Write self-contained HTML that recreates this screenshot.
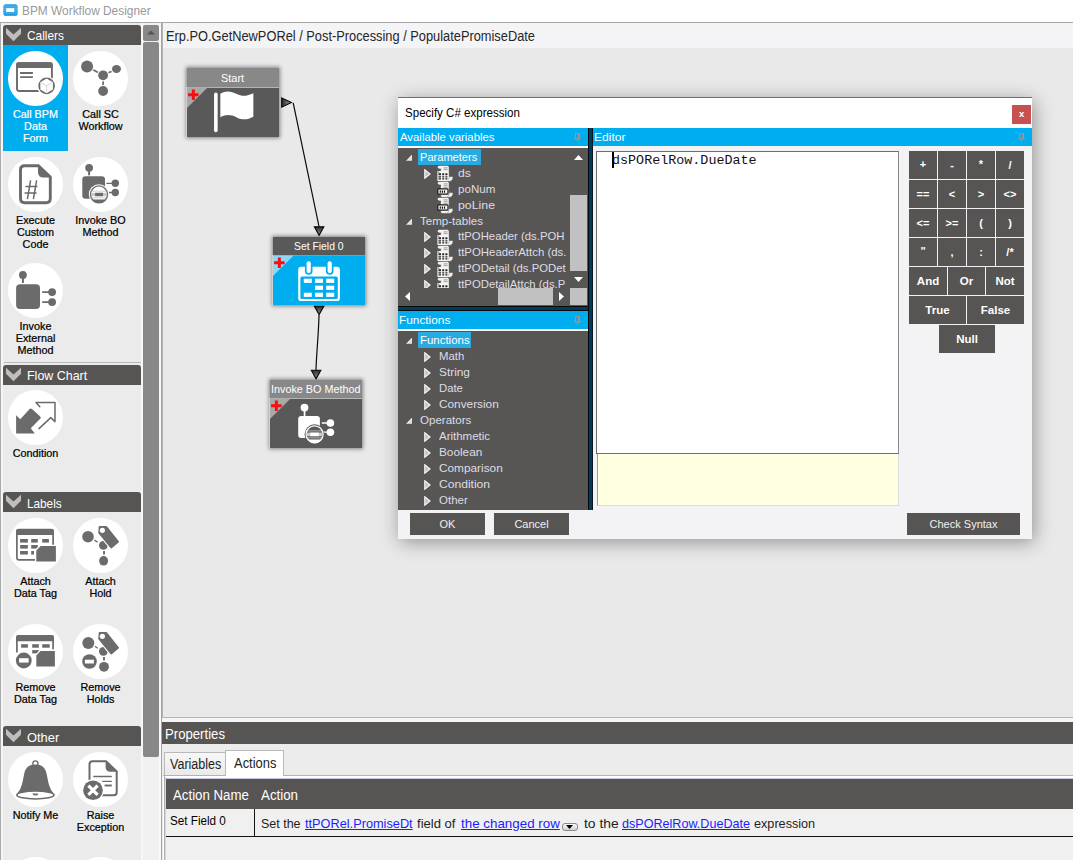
<!DOCTYPE html>
<html><head><meta charset="utf-8"><title>BPM Workflow Designer</title>
<style>
html,body{margin:0;padding:0;}
body{width:1073px;height:860px;overflow:hidden;position:relative;background:#e9e9e9;font-family:"Liberation Sans",sans-serif;}
div,span.t,svg{position:absolute;}
span.t{white-space:pre;}
span.k{-webkit-text-stroke:0.22px;}
a{color:#1c1cff;text-decoration:underline;}
</style></head>
<body>
<div style="left:0px;top:0px;width:1073px;height:22px;background:#ffffff;"></div>
<div style="left:0px;top:22px;width:1073px;height:1px;background:#a8a8a8;"></div>
<svg style="left:2.8px;top:3.9px" width="15" height="12" viewBox="0 0 15 12"><defs><linearGradient id="ti" x1="0" y1="0" x2="0" y2="1"><stop offset="0" stop-color="#1293dc"/><stop offset="0.18" stop-color="#3fb9f2"/><stop offset="0.5" stop-color="#45bdf4"/><stop offset="0.85" stop-color="#2aa6ea"/><stop offset="1" stop-color="#0a7cc6"/></linearGradient></defs><rect x="0.3" y="0.2" width="14.4" height="11.6" rx="2.6" fill="url(#ti)"/><path d="M0.3 3.2 H14.7 M0.3 5.6 H14.7 M0.3 7.6 H14.7" stroke="#6f8796" stroke-width="0.8" opacity="0.85"/><rect x="3.2" y="4.2" width="8" height="3.8" fill="#fff"/></svg>
<span class="t" style="top:5px;font-size:12px;line-height:12px;color:#999999;left:22px;transform-origin:0 0;transform:scaleX(0.9906);">BPM Workflow Designer</span>
<div style="left:0px;top:23px;width:161px;height:837px;background:#ebebeb;"></div>
<div style="left:0px;top:23px;width:3px;height:837px;background:#f5f5f5;"></div>
<div style="left:0px;top:23px;width:1px;height:837px;background:#a9a9a9;"></div>
<div style="left:141px;top:23px;width:20px;height:837px;background:#f0f0f0;"></div>
<div style="left:141px;top:23px;width:2px;height:837px;background:#f7f7f7;"></div>
<div style="left:159px;top:23px;width:2px;height:837px;background:#f9f9f9;"></div>
<div style="left:161px;top:23px;width:1px;height:837px;background:#a4a4a6;"></div>
<div style="left:162px;top:23px;width:1px;height:695px;background:#b2b2b6;"></div>
<div style="left:143px;top:25px;width:16px;height:16px;background:#888888;border-radius:2px;"></div>
<svg style="left:147px;top:30px" width="8" height="5" viewBox="0 0 8 5"><path d="M0 4.5 L4 0.5 L8 4.5 Z" fill="#555"/></svg>
<div style="left:143px;top:42px;width:16px;height:715px;background:#888888;border-radius:2px;"></div>
<div style="left:3px;top:25px;width:138px;height:20px;background:#575553;border-radius:3px 3px 0 0;"></div>
<svg style="left:5px;top:27px" width="17" height="15" viewBox="5 0 17 15"><path d="M6 0.8 L13.5 7.4 L21 0.8 V6.8 L13.5 14.3 L6 6.8 Z" fill="#bfbebd"/></svg>
<span class="t" style="top:30px;font-size:12.8px;line-height:12.8px;color:#ffffff;left:27px;transform-origin:0 0;transform:scaleX(0.9286);">Callers</span>
<div style="left:4px;top:362px;width:137px;height:1px;background:#b9b9b9;"></div>
<div style="left:3px;top:365px;width:138px;height:20px;background:#575553;border-radius:3px 3px 0 0;"></div>
<svg style="left:5px;top:367px" width="17" height="15" viewBox="5 0 17 15"><path d="M6 0.8 L13.5 7.4 L21 0.8 V6.8 L13.5 14.3 L6 6.8 Z" fill="#bfbebd"/></svg>
<span class="t" style="top:370px;font-size:12.8px;line-height:12.8px;color:#ffffff;left:27px;transform-origin:0 0;transform:scaleX(0.9735);">Flow Chart</span>
<div style="left:3px;top:492px;width:138px;height:20px;background:#575553;border-radius:3px 3px 0 0;"></div>
<svg style="left:5px;top:494px" width="17" height="15" viewBox="5 0 17 15"><path d="M6 0.8 L13.5 7.4 L21 0.8 V6.8 L13.5 14.3 L6 6.8 Z" fill="#bfbebd"/></svg>
<span class="t" style="top:498px;font-size:12.8px;line-height:12.8px;color:#ffffff;left:27px;transform-origin:0 0;transform:scaleX(0.9189);">Labels</span>
<div style="left:3px;top:726px;width:138px;height:20px;background:#575553;border-radius:3px 3px 0 0;"></div>
<svg style="left:5px;top:728px" width="17" height="15" viewBox="5 0 17 15"><path d="M6 0.8 L13.5 7.4 L21 0.8 V6.8 L13.5 14.3 L6 6.8 Z" fill="#bfbebd"/></svg>
<span class="t" style="top:732px;font-size:12.8px;line-height:12.8px;color:#ffffff;left:27px;transform-origin:0 0;transform:scaleX(1.0078);">Other</span>
<div style="left:3px;top:45px;width:65px;height:106px;background:#00adef;"></div>
<div style="left:8.100000000000001px;top:51.10000000000001px;width:54.8px;height:54.6px;border-radius:50%;background:#ffffff;"></div>
<svg style="left:8.0px;top:50.900000000000006px" width="55" height="55" viewBox="0 0 55 55"><rect x="9" y="12.1" width="34.9" height="27.9" rx="2.2" fill="#fff" stroke="#6b6b6b" stroke-width="1.9"/><path d="M8.1 17 V13.4 Q8.1 11.2 10.3 11.2 H42.6 Q44.8 11.2 44.8 13.4 V17 Z" fill="#6b6b6b"/><path d="M12.1 22 H24.9 M12.1 26.1 H24.9" stroke="#6b6b6b" stroke-width="1.8"/><circle cx="38.6" cy="34.9" r="9.6" fill="#fff"/><circle cx="38.6" cy="34.9" r="8.3" fill="#6b6b6b"/><polygon points="38.6,27.6 44.9,31.2 44.9,38.5 38.6,42.2 32.3,38.6 32.3,31.2" fill="#fff"/><path d="M32.6 31.6 L38.6 34.7 L44.6 31.6 M38.6 34.7 V41" stroke="#cfcfcf" stroke-width="0.9" fill="none"/></svg>
<span class="t k" style="top:109px;font-size:10.8px;line-height:10.8px;color:#ffffff;left:35.5px;transform:translateX(-50%);">Call BPM</span>
<span class="t k" style="top:121px;font-size:10.8px;line-height:10.8px;color:#ffffff;left:35.5px;transform:translateX(-50%);">Data</span>
<span class="t k" style="top:133px;font-size:10.8px;line-height:10.8px;color:#ffffff;left:35.5px;transform:translateX(-50%);">Form</span>
<div style="left:73.1px;top:51.10000000000001px;width:54.8px;height:54.6px;border-radius:50%;background:#ffffff;"></div>
<svg style="left:73.0px;top:50.900000000000006px" width="55" height="55" viewBox="0 0 55 55"><path d="M14.1 15.6 L30.1 24.3 L43.5 18 M30.1 24.3 V40" stroke="#6b6b6b" stroke-width="1.7" fill="none"/><circle cx="14.1" cy="15.6" r="7.2" fill="#fff"/><circle cx="30.1" cy="24.3" r="6.1" fill="#fff"/><circle cx="43.5" cy="18" r="5.6" fill="#fff"/><circle cx="30.1" cy="40" r="6.1" fill="#fff"/><circle cx="14.1" cy="15.6" r="6" fill="#6b6b6b"/><circle cx="30.1" cy="24.3" r="4.9" fill="#6b6b6b"/><ellipse cx="43.5" cy="18" rx="4.5" ry="4" fill="#6b6b6b"/><circle cx="30.1" cy="40" r="4.9" fill="#6b6b6b"/></svg>
<span class="t k" style="top:109px;font-size:10.8px;line-height:10.8px;color:#000000;left:100.5px;transform:translateX(-50%);">Call SC</span>
<span class="t k" style="top:121px;font-size:10.8px;line-height:10.8px;color:#000000;left:100.5px;transform:translateX(-50%);">Workflow</span>
<div style="left:8.100000000000001px;top:157.1px;width:54.8px;height:54.6px;border-radius:50%;background:#ffffff;"></div>
<svg style="left:8.0px;top:156.9px" width="55" height="55" viewBox="0 0 55 55"><path d="M16.6 8.7 H30.5 L42.3 20 V41.6 Q42.3 45.7 38.2 45.7 H16.6 Q12.5 45.7 12.5 41.6 V12.8 Q12.5 8.7 16.6 8.7 Z" fill="#fff" stroke="#6b6b6b" stroke-width="2.9" stroke-linejoin="round"/><path d="M30 7.6 L43.6 20.6 H35.5 Q30 20.6 30 15 Z" fill="#6b6b6b"/><path d="M22.6 23.4 L19.4 42.2 M28.6 23.4 L25.4 42.2 M17.4 29.6 H29.4 M16.6 36 H28.6" stroke="#6b6b6b" stroke-width="1.5" fill="none"/></svg>
<span class="t k" style="top:215px;font-size:10.8px;line-height:10.8px;color:#000000;left:35.5px;transform:translateX(-50%);">Execute</span>
<span class="t k" style="top:227px;font-size:10.8px;line-height:10.8px;color:#000000;left:35.5px;transform:translateX(-50%);">Custom</span>
<span class="t k" style="top:239px;font-size:10.8px;line-height:10.8px;color:#000000;left:35.5px;transform:translateX(-50%);">Code</span>
<div style="left:73.1px;top:157.1px;width:54.8px;height:54.6px;border-radius:50%;background:#ffffff;"></div>
<svg style="left:73.0px;top:156.9px" width="55" height="55" viewBox="0 0 55 55"><circle cx="16.1" cy="10.8" r="3.9" fill="#6b6b6b"/><rect x="15.1" y="13" width="2" height="5.3" fill="#6b6b6b"/><rect x="9.3" y="19.2" width="22.7" height="22.6" rx="3.2" fill="#6b6b6b"/><path d="M33.4 26.3 H40 M33.4 35.5 H40" stroke="#6b6b6b" stroke-width="1.3"/><circle cx="42.3" cy="26.3" r="3.7" fill="#6b6b6b"/><circle cx="42.3" cy="35.5" r="3.7" fill="#6b6b6b"/><circle cx="26" cy="37.4" r="10.2" fill="#fff"/><circle cx="26" cy="37.4" r="8.5" fill="#fff" stroke="#6b6b6b" stroke-width="1.4"/><path d="M19.2 42.6 A8.6 8.6 0 0 0 32.8 42.6 Z" fill="#6b6b6b"/><rect x="18" y="35.8" width="16" height="3.4" fill="#c8c8c8"/><rect x="22.1" y="35.8" width="7.9" height="3.4" fill="#6b6b6b"/><path d="M18.4 34.2 H33.6 M18.4 40.8 H33.6" stroke="#bdbdbd" stroke-width="0.7"/></svg>
<span class="t k" style="top:215px;font-size:10.8px;line-height:10.8px;color:#000000;left:100.5px;transform:translateX(-50%);">Invoke BO</span>
<span class="t k" style="top:227px;font-size:10.8px;line-height:10.8px;color:#000000;left:100.5px;transform:translateX(-50%);">Method</span>
<div style="left:8.100000000000001px;top:263.09999999999997px;width:54.8px;height:54.6px;border-radius:50%;background:#ffffff;"></div>
<svg style="left:8.0px;top:262.9px" width="55" height="55" viewBox="0 0 55 55"><circle cx="14.9" cy="12" r="3.9" fill="#6b6b6b"/><rect x="13.9" y="14" width="2" height="6" fill="#6b6b6b"/><rect x="8.1" y="21.2" width="23.9" height="24.8" rx="4" fill="#6b6b6b"/><path d="M34.2 29.1 H42 M34.2 39.1 H42" stroke="#6b6b6b" stroke-width="1.6"/><circle cx="44.1" cy="29.1" r="3.9" fill="#6b6b6b"/><circle cx="44.1" cy="39.1" r="3.9" fill="#6b6b6b"/></svg>
<span class="t k" style="top:321px;font-size:10.8px;line-height:10.8px;color:#000000;left:35.5px;transform:translateX(-50%);">Invoke</span>
<span class="t k" style="top:333px;font-size:10.8px;line-height:10.8px;color:#000000;left:35.5px;transform:translateX(-50%);">External</span>
<span class="t k" style="top:345px;font-size:10.8px;line-height:10.8px;color:#000000;left:35.5px;transform:translateX(-50%);">Method</span>
<div style="left:8.100000000000001px;top:390.4px;width:54.8px;height:54.6px;border-radius:50%;background:#ffffff;"></div>
<svg style="left:8.0px;top:390.2px" width="55" height="55" viewBox="0 0 55 55"><path d="M8.1 25.2 L12.3 29.2 L21.6 19 Q22.8 17.8 24 19 L32.2 26.4 Q33.4 27.6 32.2 28.8 L22.8 38.2 L26.8 43.6 H8.1 Z" fill="#6b6b6b"/><path d="M31 38.6 L42.8 27.6 L47 31.6 V12.6 H28 L31.8 16.8" fill="none" stroke="#6b6b6b" stroke-width="1.5" stroke-linecap="round" stroke-linejoin="round"/></svg>
<span class="t k" style="top:448px;font-size:10.8px;line-height:10.8px;color:#000000;left:35.5px;transform:translateX(-50%);">Condition</span>
<div style="left:8.100000000000001px;top:518.4000000000001px;width:54.8px;height:54.6px;border-radius:50%;background:#ffffff;"></div>
<svg style="left:8.0px;top:518.2px" width="55" height="55" viewBox="0 0 55 55"><rect x="8.9" y="11.700000000000001" width="36.2" height="30.200000000000003" rx="2.2" fill="#fff" stroke="#6b6b6b" stroke-width="1.7"/><path d="M8.1 17.1 V13.100000000000001 Q8.1 10.9 10.3 10.9 H43.7 Q45.9 10.9 45.9 13.100000000000001 V17.1 Z" fill="#6b6b6b"/><rect x="12.1" y="21" width="7.8" height="3.6" fill="#6b6b6b"/><rect x="23.2" y="21" width="6.6" height="3.6" fill="#6b6b6b"/><rect x="34.2" y="21" width="6.7" height="3.6" fill="#6b6b6b"/><rect x="12.1" y="27" width="7.8" height="3.6" fill="#6b6b6b"/><rect x="23.2" y="27" width="6.6" height="3.6" fill="#6b6b6b"/><rect x="12.1" y="33" width="7.8" height="3.5" fill="#6b6b6b"/><rect x="23.2" y="33" width="2.8" height="3.5" fill="#6b6b6b"/><path d="M27 44.8 V32 L32 26.8 H49 V44.8 Z" fill="#fff"/><path d="M28.3 43.6 V32.6 L32.6 28 H47.9 V43.6 Z" fill="#6b6b6b"/></svg>
<span class="t k" style="top:576px;font-size:10.8px;line-height:10.8px;color:#000000;left:35.5px;transform:translateX(-50%);">Attach</span>
<span class="t k" style="top:588px;font-size:10.8px;line-height:10.8px;color:#000000;left:35.5px;transform:translateX(-50%);">Data Tag</span>
<div style="left:73.1px;top:518.4000000000001px;width:54.8px;height:54.6px;border-radius:50%;background:#ffffff;"></div>
<svg style="left:73.0px;top:518.2px" width="55" height="55" viewBox="0 0 55 55"><path d="M21.4 22.1 L24.6 24.1" stroke="#6b6b6b" stroke-width="1.3"/><path d="M31 33 V36.6" stroke="#6b6b6b" stroke-width="1.9"/><circle cx="15" cy="18.7" r="5.8" fill="#6b6b6b"/><circle cx="30.4" cy="27.3" r="4.4" fill="#6b6b6b"/><path d="M26.6 7.9 H32.9 Q33.6 7.9 34.1 8.5 L45.8 23.2 Q46.3 23.9 45.6 24.5 L38.8 30.2 Q38.1 30.8 37.5 30.1 L25.6 15.6 Q25.2 15.1 25.3 14.5 L25.7 8.7 Q25.8 7.9 26.6 7.9 Z" fill="#fff" stroke="#fff" stroke-width="2.2" stroke-linejoin="round"/><path d="M26.6 7.9 H32.9 Q33.6 7.9 34.1 8.5 L45.8 23.2 Q46.3 23.9 45.6 24.5 L38.8 30.2 Q38.1 30.8 37.5 30.1 L25.6 15.6 Q25.2 15.1 25.3 14.5 L25.7 8.7 Q25.8 7.9 26.6 7.9 Z" fill="#6b6b6b"/><circle cx="29.4" cy="12.3" r="2.6" fill="#fff"/><ellipse cx="30.6" cy="42.8" rx="4.5" ry="4.8" fill="#6b6b6b"/></svg>
<span class="t k" style="top:576px;font-size:10.8px;line-height:10.8px;color:#000000;left:100.5px;transform:translateX(-50%);">Attach</span>
<span class="t k" style="top:588px;font-size:10.8px;line-height:10.8px;color:#000000;left:100.5px;transform:translateX(-50%);">Hold</span>
<div style="left:8.100000000000001px;top:624.3000000000001px;width:54.8px;height:54.6px;border-radius:50%;background:#ffffff;"></div>
<svg style="left:8.0px;top:624.1px" width="55" height="55" viewBox="0 0 55 55"><rect x="8.9" y="11.8" width="36.2" height="29.4" rx="2.2" fill="#fff" stroke="#6b6b6b" stroke-width="1.7"/><path d="M8.1 17.2 V13.2 Q8.1 11 10.3 11 H43.7 Q45.9 11 45.9 13.2 V17.2 Z" fill="#6b6b6b"/><rect x="6" y="28.5" width="42" height="16" fill="#fff"/><rect x="44" y="25.5" width="4" height="4" fill="#fff"/><rect x="13.1" y="20.2" width="6.8" height="3.5" fill="#6b6b6b"/><rect x="24.2" y="20.2" width="6.6" height="3.5" fill="#6b6b6b"/><rect x="34.2" y="20.2" width="7.5" height="3.5" fill="#6b6b6b"/><rect x="24.2" y="26.1" width="6.6" height="3.3" fill="#6b6b6b"/><path d="M27 44 V31 L32 25.8 H48 V44 Z" fill="#fff"/><path d="M28.3 42.6 V31.4 L32.5 27 H46.9 V42.6 Z" fill="#6b6b6b"/><circle cx="15.8" cy="36.5" r="9" fill="#fff"/><circle cx="15.8" cy="36.5" r="7.9" fill="#6b6b6b"/><rect x="11.1" y="34.2" width="9.5" height="4.4" fill="#fff"/></svg>
<span class="t k" style="top:682px;font-size:10.8px;line-height:10.8px;color:#000000;left:35.5px;transform:translateX(-50%);">Remove</span>
<span class="t k" style="top:694px;font-size:10.8px;line-height:10.8px;color:#000000;left:35.5px;transform:translateX(-50%);">Data Tag</span>
<div style="left:73.1px;top:624.3000000000001px;width:54.8px;height:54.6px;border-radius:50%;background:#ffffff;"></div>
<svg style="left:73.0px;top:624.1px" width="55" height="55" viewBox="0 0 55 55"><path d="M21.8 22.3 L24.8 24.2" stroke="#6b6b6b" stroke-width="1.3"/><path d="M31 33 V36.6" stroke="#6b6b6b" stroke-width="1.9"/><circle cx="15.3" cy="19" r="6" fill="#6b6b6b"/><circle cx="30.4" cy="27.3" r="4.4" fill="#6b6b6b"/><path d="M26.6 7.9 H32.9 Q33.6 7.9 34.1 8.5 L45.8 23.2 Q46.3 23.9 45.6 24.5 L38.8 30.2 Q38.1 30.8 37.5 30.1 L25.6 15.6 Q25.2 15.1 25.3 14.5 L25.7 8.7 Q25.8 7.9 26.6 7.9 Z" fill="#fff" stroke="#fff" stroke-width="2.2" stroke-linejoin="round"/><path d="M26.6 7.9 H32.9 Q33.6 7.9 34.1 8.5 L45.8 23.2 Q46.3 23.9 45.6 24.5 L38.8 30.2 Q38.1 30.8 37.5 30.1 L25.6 15.6 Q25.2 15.1 25.3 14.5 L25.7 8.7 Q25.8 7.9 26.6 7.9 Z" fill="#6b6b6b"/><circle cx="29.4" cy="12.3" r="2.6" fill="#fff"/><circle cx="31" cy="42.8" r="4.9" fill="#6b6b6b"/><circle cx="16.5" cy="37.5" r="8.4" fill="#fff"/><circle cx="16.5" cy="37.5" r="7.3" fill="#6b6b6b"/><rect x="11.9" y="35.7" width="9" height="3.8" fill="#fff"/></svg>
<span class="t k" style="top:682px;font-size:10.8px;line-height:10.8px;color:#000000;left:100.5px;transform:translateX(-50%);">Remove</span>
<span class="t k" style="top:694px;font-size:10.8px;line-height:10.8px;color:#000000;left:100.5px;transform:translateX(-50%);">Holds</span>
<div style="left:8.100000000000001px;top:752.0px;width:54.8px;height:54.6px;border-radius:50%;background:#ffffff;"></div>
<svg style="left:8.0px;top:753.0px" width="55" height="55" viewBox="0 0 55 55"><circle cx="27.4" cy="10.4" r="2.6" fill="#fff" stroke="#6b6b6b" stroke-width="1.3"/><path d="M27.4 11.6 C21 11.6 17.6 15 16.4 20 C15 26 14.6 31 12.2 36 C10.8 39 8.6 40.4 8.2 42.2 L46.6 42.2 C46.2 40.4 44 39 42.6 36 C40.2 31 39.8 26 38.4 20 C37.2 15 33.8 11.6 27.4 11.6 Z" fill="#6b6b6b"/><ellipse cx="27.4" cy="42" rx="18.6" ry="3.9" fill="#fff" stroke="#6b6b6b" stroke-width="1.5"/><path d="M24.2 40.4 H30.6 Q29.6 42.6 27.4 42.6 Q25.2 42.6 24.2 40.4 Z" fill="#6b6b6b"/></svg>
<span class="t k" style="top:810px;font-size:10.8px;line-height:10.8px;color:#000000;left:35.5px;transform:translateX(-50%);">Notify Me</span>
<div style="left:73.1px;top:752.0px;width:54.8px;height:54.6px;border-radius:50%;background:#ffffff;"></div>
<svg style="left:73.0px;top:753.0px" width="55" height="55" viewBox="0 0 55 55"><path d="M19.5 8.2 H33 L43.7 18.4 V39.2 Q43.7 42.2 40.7 42.2 H19.5 Q16.5 42.2 16.5 39.2 V11.2 Q16.5 8.2 19.5 8.2 Z" fill="#fff" stroke="#6b6b6b" stroke-width="2" stroke-linejoin="round"/><path d="M32.6 7.4 L44.6 18.8 H37.4 Q32.6 18.8 32.6 14 Z" fill="#6b6b6b"/><path d="M20.3 23.5 H38.8 M29.2 28.3 H38.8" stroke="#6b6b6b" stroke-width="1.3"/><path d="M31.6 32.5 H38.8" stroke="#6b6b6b" stroke-width="1.9"/><circle cx="20" cy="37.3" r="11" fill="#fff"/><circle cx="20" cy="37.3" r="9.8" fill="#6b6b6b"/><path d="M15.4 32.7 L24.6 41.9 M24.6 32.7 L15.4 41.9" stroke="#fff" stroke-width="3.2"/></svg>
<span class="t k" style="top:810px;font-size:10.8px;line-height:10.8px;color:#000000;left:100.5px;transform:translateX(-50%);">Raise</span>
<span class="t k" style="top:822px;font-size:10.8px;line-height:10.8px;color:#000000;left:100.5px;transform:translateX(-50%);">Exception</span>
<div style="left:8.100000000000001px;top:857.2px;width:54.8px;height:54.6px;border-radius:50%;background:#ffffff;"></div>
<div style="left:73.1px;top:857.2px;width:54.8px;height:54.6px;border-radius:50%;background:#ffffff;"></div>
<div style="left:163px;top:23px;width:910px;height:25px;background:#f4f4f6;"></div>
<span class="t" style="top:29px;font-size:14px;line-height:14px;color:#262626;left:166px;transform-origin:0 0;transform:scaleX(0.9154);">Erp.PO.GetNewPORel / Post-Processing / PopulatePromiseDate</span>
<div style="left:163px;top:48px;width:910px;height:669px;background:#e9e9e9;"></div>
<div style="left:163px;top:717px;width:910px;height:1px;background:#b5b5b5;"></div>
<div style="left:162px;top:718px;width:911px;height:4px;background:#f5f5f5;"></div>
<svg style="left:163px;top:48px" width="400" height="420" viewBox="163 48 400 420">
<defs><linearGradient id="agv" x1="0" y1="0" x2="0" y2="1"><stop offset="0" stop-color="#2a2a2a"/><stop offset="1" stop-color="#9a9a9a"/></linearGradient>
<linearGradient id="agh" x1="0" y1="0" x2="1" y2="0"><stop offset="0" stop-color="#2a2a2a"/><stop offset="1" stop-color="#a0a0a0"/></linearGradient></defs>
<path d="M293.2 102.9 L319 226.5" stroke="#0a0a0a" stroke-width="1.2" fill="none"/>
<path d="M319 315 C318.6 335 316.5 352 316 370" stroke="#0a0a0a" stroke-width="1.2" fill="none"/>
<path d="M281.7 98 L291.4 102.6 L281.7 107.2 Z" fill="url(#agh)" stroke="#0a0a0a" stroke-width="1.15"/>
<path d="M314.4 226.8 L323.8 226.8 L319.1 235.4 Z" fill="url(#agv)" stroke="#0a0a0a" stroke-width="1.15"/>
<path d="M314.4 306.2 L323.8 306.2 L319.1 314.6 Z" fill="url(#agv)" stroke="#0a0a0a" stroke-width="1.15"/>
<path d="M311.4 370.2 L320.8 370.2 L316.1 378.8 Z" fill="url(#agv)" stroke="#0a0a0a" stroke-width="1.15"/>
</svg>
<div style="left:187px;top:68px;width:92px;height:69px;background:#595959;box-shadow:0 0 4px 1px rgba(0,0,0,0.45);"></div>
<div style="left:187px;top:68px;width:92px;height:19px;background:#888888;"></div>
<div style="left:187px;top:87px;width:92px;height:1px;background:rgba(255,255,255,0.55);"></div>
<div style="left:186px;top:87px;width:1px;height:50px;background:rgba(255,255,255,0.45);"></div>
<svg style="left:187px;top:87px" width="92" height="50" viewBox="0 0 92 50"><path d="M0 0.5 L20.6 0.5 L0 21.1 Z" fill="#a9a9a9"/><path d="M1.1 7.75 H11.6 M6.35 2.5 V13" stroke="#fb0d0d" stroke-width="3"/><g transform="translate(0.75 0)"><rect x="26.3" y="5.6" width="3.6" height="39.6" rx="1.8" fill="#fff"/><path d="M32.6 6.8 C38 3.6 43 4 49 7 C55 10 60 8.8 65.6 6.2 L65.6 29.8 C60 32.8 55 33.4 49 30.4 C43 27.4 38 27.2 32.6 30.2 Z" fill="#fff"/></g></svg>
<span class="t" style="top:73px;font-size:11.5px;line-height:11.5px;color:#ffffff;left:221px;transform-origin:0 0;transform:scaleX(0.9525);">Start</span>
<div style="left:273px;top:237px;width:92px;height:68px;background:#00adef;box-shadow:0 0 4px 1px rgba(0,0,0,0.45);"></div>
<div style="left:273px;top:237px;width:92px;height:18px;background:#595959;"></div>
<div style="left:273px;top:255px;width:92px;height:1px;background:rgba(255,255,255,0.16);"></div>
<div style="left:272px;top:255px;width:1px;height:50px;background:rgba(255,255,255,0.45);"></div>
<svg style="left:273px;top:255px" width="92" height="50" viewBox="0 0 92 50"><path d="M0 0.5 L20.6 0.5 L0 21.1 Z" fill="#8fd6f6"/><path d="M1.1 7.75 H11.6 M6.35 2.5 V13" stroke="#fb0d0d" stroke-width="3"/><rect x="25.2" y="11.8" width="41.7" height="34.3" rx="3.2" fill="#fff"/><rect x="27.4" y="21.6" width="37.4" height="22.4" rx="1.6" fill="#00adef"/><rect x="30.8" y="23.7" width="8" height="4.2" fill="#fff"/><rect x="42" y="23.7" width="8" height="4.2" fill="#fff"/><rect x="53.2" y="23.7" width="8" height="4.2" fill="#fff"/><rect x="42" y="30.7" width="8" height="4.2" fill="#fff"/><rect x="53.2" y="30.7" width="8" height="4.2" fill="#fff"/><rect x="30.8" y="37.7" width="8" height="4.2" fill="#fff"/><rect x="42" y="37.7" width="8" height="4.2" fill="#fff"/><rect x="53.2" y="37.7" width="8" height="4.2" fill="#fff"/><rect x="31.9" y="4.6" width="7.6" height="15.2" rx="3.8" fill="#00adef"/><rect x="52.9" y="4.6" width="7.6" height="15.2" rx="3.8" fill="#00adef"/><rect x="33.6" y="6.2" width="4.2" height="12" rx="2.1" fill="#fff"/><rect x="54.6" y="6.2" width="4.2" height="12" rx="2.1" fill="#fff"/></svg>
<span class="t" style="top:241px;font-size:11.5px;line-height:11.5px;color:#ffffff;left:294px;transform-origin:0 0;transform:scaleX(0.9019);">Set Field 0</span>
<div style="left:270px;top:380px;width:92px;height:68px;background:#595959;box-shadow:0 0 4px 1px rgba(0,0,0,0.45);"></div>
<div style="left:270px;top:380px;width:92px;height:18px;background:#888888;"></div>
<div style="left:270px;top:398px;width:92px;height:1px;background:rgba(255,255,255,0.55);"></div>
<div style="left:269px;top:398px;width:1px;height:50px;background:rgba(255,255,255,0.45);"></div>
<svg style="left:270px;top:398px" width="92" height="50" viewBox="0 0 92 50"><path d="M0 0.5 L20.6 0.5 L0 21.1 Z" fill="#a9a9a9"/><path d="M1.1 7.75 H11.6 M6.35 2.5 V13" stroke="#fb0d0d" stroke-width="3"/><circle cx="34.5" cy="9.6" r="3.9" fill="#fff"/><rect x="33.7" y="12" width="1.7" height="6.5" fill="#fff"/><rect x="28.2" y="18" width="21.7" height="22" rx="3" fill="#fff"/><path d="M51.8 25 H58 M51.8 34.2 H58" stroke="#fff" stroke-width="1.3"/><circle cx="60.4" cy="25" r="3.8" fill="#fff"/><circle cx="60.4" cy="34.2" r="3.8" fill="#fff"/><circle cx="44.6" cy="36.3" r="10" fill="#595959"/><circle cx="44.6" cy="36.3" r="8.5" fill="#595959" stroke="#fff" stroke-width="1.3"/><path d="M37.6 41.6 A8.5 8.5 0 0 0 51.6 41.6 Z" fill="#fff"/><rect x="36.4" y="34.6" width="16.6" height="3.6" fill="#c9c9c9"/><rect x="40.4" y="34.6" width="8.4" height="3.6" fill="#fff"/><path d="M37 32.9 H52.2 M37 39.9 H52.2" stroke="#d8d8d8" stroke-width="0.7"/></svg>
<span class="t" style="top:384px;font-size:11.5px;line-height:11.5px;color:#ffffff;left:271px;transform-origin:0 0;transform:scaleX(0.9388);">Invoke BO Method</span>
<div style="left:162px;top:722px;width:911px;height:22px;background:#575553;"></div>
<span class="t" style="top:727px;font-size:14px;line-height:14px;color:#ffffff;left:165px;transform-origin:0 0;transform:scaleX(0.9397);">Properties</span>
<div style="left:162px;top:744px;width:911px;height:116px;background:#ececec;"></div>
<div style="left:164px;top:752px;width:61.5px;height:23.5px;background:linear-gradient(#f7f7f7,#e9e9e9);border:1px solid #b9b9b9;border-bottom:none;box-sizing:border-box;"></div>
<span class="t" style="top:757px;font-size:14px;line-height:14px;color:#1e1e1e;left:170px;transform-origin:0 0;transform:scaleX(0.8949);">Variables</span>
<div style="left:163px;top:775px;width:910px;height:1px;background:#b3b3b3;"></div>
<div style="left:163px;top:776px;width:910px;height:84px;background:#ffffff;"></div>
<div style="left:164px;top:775px;width:1px;height:85px;background:#b0b0b0;"></div>
<div style="left:225px;top:750px;width:59px;height:26px;background:#ffffff;border:1px solid #b9b9b9;border-bottom:none;box-sizing:border-box;"></div>
<span class="t" style="top:756px;font-size:14px;line-height:14px;color:#1e1e1e;left:234px;transform-origin:0 0;transform:scaleX(0.9246);">Actions</span>
<div style="left:166px;top:779px;width:907px;height:81px;background:#f0f0f0;"></div>
<div style="left:165px;top:777px;width:1px;height:83px;background:#d4d4ee;"></div>
<div style="left:165px;top:778px;width:908px;height:1px;background:#c3c4e2;"></div>
<div style="left:166px;top:779px;width:907px;height:30px;background:#575553;"></div>
<span class="t" style="top:788px;font-size:14px;line-height:14px;color:#ffffff;left:173px;transform-origin:0 0;transform:scaleX(0.9472);">Action Name</span>
<span class="t" style="top:788px;font-size:14px;line-height:14px;color:#ffffff;left:261px;transform-origin:0 0;transform:scaleX(0.9517);">Action</span>
<div style="left:166px;top:809px;width:907px;height:27px;background:#f0f0f0;"></div>
<div style="left:254px;top:809px;width:1px;height:27px;background:#111111;"></div>
<div style="left:166px;top:836px;width:907px;height:1px;background:#111111;"></div>
<span class="t" style="top:815px;font-size:12px;line-height:12px;color:#000000;left:170px;transform-origin:0 0;transform:scaleX(0.9722);">Set Field 0</span>
<span class="t" style="top:817px;font-size:13.5px;line-height:13.5px;color:#1e1e1e;left:261px;transform-origin:0 0;transform:scaleX(0.9236);">Set the</span>
<span class="t" style="top:817px;font-size:13.5px;line-height:13.5px;color:#1c1cff;left:305px;transform-origin:0 0;transform:scaleX(0.9440);text-decoration:underline;">ttPORel.PromiseDt</span>
<span class="t" style="top:817px;font-size:13.5px;line-height:13.5px;color:#1e1e1e;left:417px;transform-origin:0 0;transform:scaleX(0.9672);">field of</span>
<span class="t" style="top:817px;font-size:13.5px;line-height:13.5px;color:#1c1cff;left:461px;transform-origin:0 0;transform:scaleX(0.9900);text-decoration:underline;">the changed row</span>
<div style="left:561.5px;top:822.5px;width:16.5px;height:8.5px;border:1px solid #8a8a8a;border-radius:3px;background:linear-gradient(#fafafa,#d2d2d2);box-sizing:border-box;"></div>
<svg style="left:566px;top:825px" width="7" height="4" viewBox="0 0 7 4"><path d="M0 0 H7 L3.5 4 Z" fill="#000"/></svg>
<span class="t" style="top:817px;font-size:13.5px;line-height:13.5px;color:#1e1e1e;left:584px;transform-origin:0 0;transform:scaleX(1.0259);">to the</span>
<span class="t" style="top:817px;font-size:13.5px;line-height:13.5px;color:#1c1cff;left:622px;transform-origin:0 0;transform:scaleX(0.9324);text-decoration:underline;">dsPORelRow.DueDate</span>
<span class="t" style="top:817px;font-size:13.5px;line-height:13.5px;color:#1e1e1e;left:754px;transform-origin:0 0;transform:scaleX(0.9366);">expression</span>
<div style="left:398px;top:98px;width:634px;height:441px;background:#f3f3f5;box-shadow:2px 3px 18px 0 rgba(0,0,0,0.38);"></div>
<div style="left:398px;top:97px;width:634px;height:1px;background:#6f6f6f;"></div>
<div style="left:398px;top:98px;width:634px;height:30px;background:#ffffff;"></div>
<span class="t" style="top:107px;font-size:12px;line-height:12px;color:#000000;left:405px;transform-origin:0 0;transform:scaleX(0.9624);">Specify C# expression</span>
<div style="left:1012px;top:105px;width:19px;height:19px;background:#c75050;"></div>
<span class="t" style="top:109px;font-size:9.6px;line-height:9.6px;color:#ffffff;font-weight:700;left:1021.6px;transform:translateX(-50%);">x</span>
<div style="left:398px;top:128px;width:190px;height:18px;background:#00adef;"></div>
<span class="t" style="top:132px;font-size:11px;line-height:11px;color:#ffffff;left:400px;transform-origin:0 0;transform:scaleX(1.0322);">Available variables</span>
<svg style="left:574px;top:133px" width="7" height="9" viewBox="0 0 7 9"><path d="M1 0 H6 V5.3 H7 V6.4 H4.1 V9 H3 V6.4 H0 V5.3 H1 Z M2 1 V5.3 H4 V1 Z" fill="#a3928b" fill-rule="evenodd"/></svg>
<div style="left:398px;top:146px;width:190px;height:2px;background:#fcf8f6;"></div>
<div style="left:398px;top:148px;width:190px;height:158px;background:#585654;"></div>
<div style="left:398px;top:306px;width:190px;height:5px;background:#003a5d;"></div>
<div style="left:398px;top:306px;width:190px;height:1px;background:#0a0a0a;"></div>
<div style="left:398px;top:310px;width:190px;height:1px;background:#0a0a0a;"></div>
<div style="left:398px;top:311px;width:190px;height:18px;background:#00adef;"></div>
<span class="t" style="top:315px;font-size:11px;line-height:11px;color:#ffffff;left:399px;transform-origin:0 0;transform:scaleX(1.0762);">Functions</span>
<svg style="left:574px;top:316px" width="7" height="9" viewBox="0 0 7 9"><path d="M1 0 H6 V5.3 H7 V6.4 H4.1 V9 H3 V6.4 H0 V5.3 H1 Z M2 1 V5.3 H4 V1 Z" fill="#a3928b" fill-rule="evenodd"/></svg>
<div style="left:398px;top:329px;width:190px;height:2px;background:#fcf8f6;"></div>
<div style="left:398px;top:331px;width:190px;height:178.5px;background:#585654;"></div>
<div style="left:588px;top:128px;width:5px;height:381.5px;background:#003a5d;"></div>
<div style="left:588px;top:128px;width:1px;height:381.5px;background:#0a0a0a;"></div>
<div style="left:592.4px;top:128px;width:0.6px;height:381.5px;background:#0a1520;"></div>
<div style="left:593px;top:128px;width:439px;height:18px;background:#00adef;"></div>
<span class="t" style="top:132px;font-size:11px;line-height:11px;color:#ffffff;left:594px;transform-origin:0 0;transform:scaleX(1.0929);">Editor</span>
<svg style="left:1018px;top:133px" width="7" height="9" viewBox="0 0 7 9"><path d="M1 0 H6 V5.3 H7 V6.4 H4.1 V9 H3 V6.4 H0 V5.3 H1 Z M2 1 V5.3 H4 V1 Z" fill="#a3928b" fill-rule="evenodd"/></svg>
<div style="left:418px;top:149px;width:63px;height:16px;background:#29abe2;"></div>
<svg style="left:405.6px;top:154.3px" width="6.6" height="6.8" viewBox="0 0 6.6 6.8"><path d="M6.5 0 V6.7 H0 Z" fill="#ececec"/><path d="M5.3 3.2 V5.5 H3 Z" fill="#c9c9c9"/></svg>
<span class="t" style="top:152px;font-size:11px;line-height:11px;color:#ffffff;left:420px;transform-origin:0 0;transform:scaleX(1.0067);">Parameters</span>
<svg style="left:424px;top:168.6px" width="7" height="10" viewBox="0 0 6.6 9.8"><path d="M0.6 0.7 L5.8 4.9 L0.6 9.1 Z" fill="#c2c2c2" stroke="#f6f6f6" stroke-width="1.1"/></svg>
<svg style="left:436.6px;top:165.3px" width="16.5" height="17" viewBox="0 0 16.5 17"><path d="M2.6 0.4 H10.4 Q12.1 0.4 12.1 2.1 V11.6 H16 Q16.2 16.4 12 16.4 H5.2 Q3.6 16.4 3.6 14.8 V3.9 H2.4 Q0.3 3.9 0.3 2.1 Q0.3 0.4 2.6 0.4 Z" fill="#f3f3f3" stroke="#454341" stroke-width="0.5"/><path d="M12.1 11.9 Q12.3 15.2 10 16.2" stroke="#9a9a9a" stroke-width="0.7" fill="none"/><path d="M6.6 2.9 H10.6 M6.6 4.7 H10.6" stroke="#9d9d9d" stroke-width="1"/><rect x="0.4" y="6" width="11" height="10" fill="#f6f6f6"/><rect x="1.2" y="6.7" width="1" height="0.9" fill="#222"/><path d="M1.5 9.3 H4 M5.2 9.3 H7.2 M8.4 9.3 H10.4" stroke="#262422" stroke-width="1.9"/><path d="M1.5 11.9 H4 M5.2 11.9 H7.2 M8.4 11.9 H10.4 M1.5 13.9 H4 M5.2 13.9 H7.2 M8.4 13.9 H10.4" stroke="#262422" stroke-width="1.1"/></svg>
<span class="t" style="top:168px;font-size:11px;line-height:11px;color:#dddde6;left:458px;transform-origin:0 0;transform:scaleX(1.1053);">ds</span>
<svg style="left:436.6px;top:181.3px" width="16.5" height="17" viewBox="0 0 16.5 17"><path d="M2.6 0.4 H10.4 Q12.1 0.4 12.1 2.1 V11.6 H16 Q16.2 16.4 12 16.4 H5.2 Q3.6 16.4 3.6 14.8 V3.9 H2.4 Q0.3 3.9 0.3 2.1 Q0.3 0.4 2.6 0.4 Z" fill="#f3f3f3" stroke="#454341" stroke-width="0.5"/><path d="M12.1 11.9 Q12.3 15.2 10 16.2" stroke="#9a9a9a" stroke-width="0.7" fill="none"/><path d="M6.6 2.9 H10.6 M6.6 4.7 H10.6" stroke="#9d9d9d" stroke-width="1"/><path d="M6.6 6.4 H10.6" stroke="#9d9d9d" stroke-width="1"/><rect x="0.8" y="7.9" width="10.2" height="5.2" rx="0.9" fill="#f4f4f4" stroke="#1c1a18" stroke-width="1.2"/><path d="M3.3 9.4 V11.7 M5.4 9.4 V11.7 M7.5 9.4 V11.7" stroke="#1c1a18" stroke-width="1.2"/></svg>
<span class="t" style="top:184px;font-size:11px;line-height:11px;color:#dddde6;left:458px;transform-origin:0 0;transform:scaleX(1.0530);">poNum</span>
<svg style="left:436.6px;top:197.3px" width="16.5" height="17" viewBox="0 0 16.5 17"><path d="M2.6 0.4 H10.4 Q12.1 0.4 12.1 2.1 V11.6 H16 Q16.2 16.4 12 16.4 H5.2 Q3.6 16.4 3.6 14.8 V3.9 H2.4 Q0.3 3.9 0.3 2.1 Q0.3 0.4 2.6 0.4 Z" fill="#f3f3f3" stroke="#454341" stroke-width="0.5"/><path d="M12.1 11.9 Q12.3 15.2 10 16.2" stroke="#9a9a9a" stroke-width="0.7" fill="none"/><path d="M6.6 2.9 H10.6 M6.6 4.7 H10.6" stroke="#9d9d9d" stroke-width="1"/><path d="M6.6 6.4 H10.6" stroke="#9d9d9d" stroke-width="1"/><rect x="0.8" y="7.9" width="10.2" height="5.2" rx="0.9" fill="#f4f4f4" stroke="#1c1a18" stroke-width="1.2"/><path d="M3.3 9.4 V11.7 M5.4 9.4 V11.7 M7.5 9.4 V11.7" stroke="#1c1a18" stroke-width="1.2"/></svg>
<span class="t" style="top:200px;font-size:11px;line-height:11px;color:#dddde6;left:458px;transform-origin:0 0;transform:scaleX(1.1199);">poLine</span>
<svg style="left:405.6px;top:218.3px" width="6.6" height="6.8" viewBox="0 0 6.6 6.8"><path d="M6.5 0 V6.7 H0 Z" fill="#ececec"/><path d="M5.3 3.2 V5.5 H3 Z" fill="#c9c9c9"/></svg>
<span class="t" style="top:216px;font-size:11px;line-height:11px;color:#dddde6;left:420px;transform-origin:0 0;transform:scaleX(1.0503);">Temp-tables</span>
<svg style="left:424px;top:232.2px" width="7" height="10" viewBox="0 0 6.6 9.8"><path d="M0.6 0.7 L5.8 4.9 L0.6 9.1 Z" fill="#c2c2c2" stroke="#f6f6f6" stroke-width="1.1"/></svg>
<svg style="left:436.6px;top:228.70000000000002px" width="16.5" height="17" viewBox="0 0 16.5 17"><path d="M2.6 0.4 H10.4 Q12.1 0.4 12.1 2.1 V11.6 H16 Q16.2 16.4 12 16.4 H5.2 Q3.6 16.4 3.6 14.8 V3.9 H2.4 Q0.3 3.9 0.3 2.1 Q0.3 0.4 2.6 0.4 Z" fill="#f3f3f3" stroke="#454341" stroke-width="0.5"/><path d="M12.1 11.9 Q12.3 15.2 10 16.2" stroke="#9a9a9a" stroke-width="0.7" fill="none"/><path d="M6.6 2.9 H10.6 M6.6 4.7 H10.6" stroke="#9d9d9d" stroke-width="1"/><rect x="0.4" y="6" width="11" height="10" fill="#f6f6f6"/><rect x="1.2" y="6.7" width="1" height="0.9" fill="#222"/><path d="M1.5 9.3 H4 M5.2 9.3 H7.2 M8.4 9.3 H10.4" stroke="#262422" stroke-width="1.9"/><path d="M1.5 11.9 H4 M5.2 11.9 H7.2 M8.4 11.9 H10.4 M1.5 13.9 H4 M5.2 13.9 H7.2 M8.4 13.9 H10.4" stroke="#262422" stroke-width="1.1"/></svg>
<span class="t" style="top:231px;font-size:11px;line-height:11px;color:#dddde6;left:458px;transform-origin:0 0;transform:scaleX(1.0306);">ttPOHeader (ds.POH</span>
<svg style="left:424px;top:248.2px" width="7" height="10" viewBox="0 0 6.6 9.8"><path d="M0.6 0.7 L5.8 4.9 L0.6 9.1 Z" fill="#c2c2c2" stroke="#f6f6f6" stroke-width="1.1"/></svg>
<svg style="left:436.6px;top:244.70000000000002px" width="16.5" height="17" viewBox="0 0 16.5 17"><path d="M2.6 0.4 H10.4 Q12.1 0.4 12.1 2.1 V11.6 H16 Q16.2 16.4 12 16.4 H5.2 Q3.6 16.4 3.6 14.8 V3.9 H2.4 Q0.3 3.9 0.3 2.1 Q0.3 0.4 2.6 0.4 Z" fill="#f3f3f3" stroke="#454341" stroke-width="0.5"/><path d="M12.1 11.9 Q12.3 15.2 10 16.2" stroke="#9a9a9a" stroke-width="0.7" fill="none"/><path d="M6.6 2.9 H10.6 M6.6 4.7 H10.6" stroke="#9d9d9d" stroke-width="1"/><rect x="0.4" y="6" width="11" height="10" fill="#f6f6f6"/><rect x="1.2" y="6.7" width="1" height="0.9" fill="#222"/><path d="M1.5 9.3 H4 M5.2 9.3 H7.2 M8.4 9.3 H10.4" stroke="#262422" stroke-width="1.9"/><path d="M1.5 11.9 H4 M5.2 11.9 H7.2 M8.4 11.9 H10.4 M1.5 13.9 H4 M5.2 13.9 H7.2 M8.4 13.9 H10.4" stroke="#262422" stroke-width="1.1"/></svg>
<span class="t" style="top:247px;font-size:11px;line-height:11px;color:#dddde6;left:458px;transform-origin:0 0;transform:scaleX(1.0370);">ttPOHeaderAttch (ds.</span>
<svg style="left:424px;top:264.2px" width="7" height="10" viewBox="0 0 6.6 9.8"><path d="M0.6 0.7 L5.8 4.9 L0.6 9.1 Z" fill="#c2c2c2" stroke="#f6f6f6" stroke-width="1.1"/></svg>
<svg style="left:436.6px;top:260.7px" width="16.5" height="17" viewBox="0 0 16.5 17"><path d="M2.6 0.4 H10.4 Q12.1 0.4 12.1 2.1 V11.6 H16 Q16.2 16.4 12 16.4 H5.2 Q3.6 16.4 3.6 14.8 V3.9 H2.4 Q0.3 3.9 0.3 2.1 Q0.3 0.4 2.6 0.4 Z" fill="#f3f3f3" stroke="#454341" stroke-width="0.5"/><path d="M12.1 11.9 Q12.3 15.2 10 16.2" stroke="#9a9a9a" stroke-width="0.7" fill="none"/><path d="M6.6 2.9 H10.6 M6.6 4.7 H10.6" stroke="#9d9d9d" stroke-width="1"/><rect x="0.4" y="6" width="11" height="10" fill="#f6f6f6"/><rect x="1.2" y="6.7" width="1" height="0.9" fill="#222"/><path d="M1.5 9.3 H4 M5.2 9.3 H7.2 M8.4 9.3 H10.4" stroke="#262422" stroke-width="1.9"/><path d="M1.5 11.9 H4 M5.2 11.9 H7.2 M8.4 11.9 H10.4 M1.5 13.9 H4 M5.2 13.9 H7.2 M8.4 13.9 H10.4" stroke="#262422" stroke-width="1.1"/></svg>
<span class="t" style="top:263px;font-size:11px;line-height:11px;color:#dddde6;left:458px;transform-origin:0 0;transform:scaleX(1.0297);">ttPODetail (ds.PODet</span>
<div style="left:398px;top:277px;width:172px;height:11px;overflow:hidden;">
<svg style="left:26px;top:3.2px" width="7" height="10" viewBox="0 0 6.6 9.8"><path d="M0.6 0.7 L5.8 4.9 L0.6 9.1 Z" fill="#c2c2c2" stroke="#f6f6f6" stroke-width="1.1"/></svg>
<svg style="left:38.6px;top:-0.3px" width="16.5" height="17" viewBox="0 0 16.5 17"><path d="M2.6 0.4 H10.4 Q12.1 0.4 12.1 2.1 V11.6 H16 Q16.2 16.4 12 16.4 H5.2 Q3.6 16.4 3.6 14.8 V3.9 H2.4 Q0.3 3.9 0.3 2.1 Q0.3 0.4 2.6 0.4 Z" fill="#f3f3f3" stroke="#454341" stroke-width="0.5"/><path d="M12.1 11.9 Q12.3 15.2 10 16.2" stroke="#9a9a9a" stroke-width="0.7" fill="none"/><path d="M6.6 2.9 H10.6 M6.6 4.7 H10.6" stroke="#9d9d9d" stroke-width="1"/><rect x="0.4" y="6" width="11" height="10" fill="#f6f6f6"/><rect x="1.2" y="6.7" width="1" height="0.9" fill="#222"/><path d="M1.5 9.3 H4 M5.2 9.3 H7.2 M8.4 9.3 H10.4" stroke="#262422" stroke-width="1.9"/><path d="M1.5 11.9 H4 M5.2 11.9 H7.2 M8.4 11.9 H10.4 M1.5 13.9 H4 M5.2 13.9 H7.2 M8.4 13.9 H10.4" stroke="#262422" stroke-width="1.1"/></svg>
<span class="t" style="top:2px;font-size:11px;line-height:11px;color:#dddde6;left:60px;transform-origin:0 0;transform:scaleX(1.0324);">ttPODetailAttch (ds.P</span>
</div>
<div style="left:570px;top:148px;width:18px;height:140px;background:#585654;"></div>
<svg style="left:573.8px;top:155px" width="9" height="5" viewBox="0 0 9 5"><path d="M0 5 L4.5 0 L9 5 Z" fill="#ffffff"/></svg>
<div style="left:570px;top:195px;width:17px;height:76px;background:#c1c1c1;"></div>
<svg style="left:573.8px;top:276.5px" width="9" height="5" viewBox="0 0 9 5"><path d="M0 0 L4.5 5 L9 0 Z" fill="#ffffff"/></svg>
<div style="left:398px;top:288px;width:172px;height:17px;background:#585654;"></div>
<svg style="left:404.5px;top:292px" width="5" height="9" viewBox="0 0 5 9"><path d="M5 0 L0 4.5 L5 9 Z" fill="#ffffff"/></svg>
<div style="left:498px;top:288px;width:55px;height:17px;background:#c1c1c1;"></div>
<svg style="left:559px;top:292px" width="5" height="9" viewBox="0 0 5 9"><path d="M0 0 L5 4.5 L0 9 Z" fill="#ffffff"/></svg>
<div style="left:570px;top:288px;width:17px;height:17px;background:#c1c1c1;"></div>
<div style="left:418px;top:332px;width:53px;height:15.6px;background:#29abe2;"></div>
<svg style="left:405.6px;top:337.2px" width="6.6" height="6.8" viewBox="0 0 6.6 6.8"><path d="M6.5 0 V6.7 H0 Z" fill="#ececec"/><path d="M5.3 3.2 V5.5 H3 Z" fill="#c9c9c9"/></svg>
<span class="t" style="top:335px;font-size:11px;line-height:11px;color:#ffffff;left:420px;transform-origin:0 0;transform:scaleX(1.0401);">Functions</span>
<svg style="left:424px;top:351.5px" width="7" height="10" viewBox="0 0 6.6 9.8"><path d="M0.6 0.7 L5.8 4.9 L0.6 9.1 Z" fill="#c2c2c2" stroke="#f6f6f6" stroke-width="1.1"/></svg>
<span class="t" style="top:351px;font-size:11px;line-height:11px;color:#dddde6;left:439px;transform-origin:0 0;transform:scaleX(1.0303);">Math</span>
<svg style="left:424px;top:367.5px" width="7" height="10" viewBox="0 0 6.6 9.8"><path d="M0.6 0.7 L5.8 4.9 L0.6 9.1 Z" fill="#c2c2c2" stroke="#f6f6f6" stroke-width="1.1"/></svg>
<span class="t" style="top:367px;font-size:11px;line-height:11px;color:#dddde6;left:439px;transform-origin:0 0;transform:scaleX(1.0770);">String</span>
<svg style="left:424px;top:383.5px" width="7" height="10" viewBox="0 0 6.6 9.8"><path d="M0.6 0.7 L5.8 4.9 L0.6 9.1 Z" fill="#c2c2c2" stroke="#f6f6f6" stroke-width="1.1"/></svg>
<span class="t" style="top:383px;font-size:11px;line-height:11px;color:#dddde6;left:439px;transform-origin:0 0;transform:scaleX(1.0257);">Date</span>
<svg style="left:424px;top:399.5px" width="7" height="10" viewBox="0 0 6.6 9.8"><path d="M0.6 0.7 L5.8 4.9 L0.6 9.1 Z" fill="#c2c2c2" stroke="#f6f6f6" stroke-width="1.1"/></svg>
<span class="t" style="top:399px;font-size:11px;line-height:11px;color:#dddde6;left:439px;transform-origin:0 0;transform:scaleX(1.0742);">Conversion</span>
<svg style="left:405.6px;top:417.2px" width="6.6" height="6.8" viewBox="0 0 6.6 6.8"><path d="M6.5 0 V6.7 H0 Z" fill="#ececec"/><path d="M5.3 3.2 V5.5 H3 Z" fill="#c9c9c9"/></svg>
<span class="t" style="top:415px;font-size:11px;line-height:11px;color:#dddde6;left:420px;transform-origin:0 0;transform:scaleX(1.0507);">Operators</span>
<svg style="left:424px;top:431.5px" width="7" height="10" viewBox="0 0 6.6 9.8"><path d="M0.6 0.7 L5.8 4.9 L0.6 9.1 Z" fill="#c2c2c2" stroke="#f6f6f6" stroke-width="1.1"/></svg>
<span class="t" style="top:431px;font-size:11px;line-height:11px;color:#dddde6;left:439px;transform-origin:0 0;transform:scaleX(1.0443);">Arithmetic</span>
<svg style="left:424px;top:447.5px" width="7" height="10" viewBox="0 0 6.6 9.8"><path d="M0.6 0.7 L5.8 4.9 L0.6 9.1 Z" fill="#c2c2c2" stroke="#f6f6f6" stroke-width="1.1"/></svg>
<span class="t" style="top:447px;font-size:11px;line-height:11px;color:#dddde6;left:439px;transform-origin:0 0;transform:scaleX(1.0716);">Boolean</span>
<svg style="left:424px;top:463.5px" width="7" height="10" viewBox="0 0 6.6 9.8"><path d="M0.6 0.7 L5.8 4.9 L0.6 9.1 Z" fill="#c2c2c2" stroke="#f6f6f6" stroke-width="1.1"/></svg>
<span class="t" style="top:463px;font-size:11px;line-height:11px;color:#dddde6;left:439px;transform-origin:0 0;transform:scaleX(1.0749);">Comparison</span>
<svg style="left:424px;top:479.5px" width="7" height="10" viewBox="0 0 6.6 9.8"><path d="M0.6 0.7 L5.8 4.9 L0.6 9.1 Z" fill="#c2c2c2" stroke="#f6f6f6" stroke-width="1.1"/></svg>
<span class="t" style="top:479px;font-size:11px;line-height:11px;color:#dddde6;left:439px;transform-origin:0 0;transform:scaleX(1.0986);">Condition</span>
<svg style="left:424px;top:495.5px" width="7" height="10" viewBox="0 0 6.6 9.8"><path d="M0.6 0.7 L5.8 4.9 L0.6 9.1 Z" fill="#c2c2c2" stroke="#f6f6f6" stroke-width="1.1"/></svg>
<span class="t" style="top:495px;font-size:11px;line-height:11px;color:#dddde6;left:439px;transform-origin:0 0;transform:scaleX(1.0445);">Other</span>
<div style="left:596px;top:151px;width:303px;height:303px;background:#ffffff;border:1px solid #6e6e6e;border-right-color:#8a8a8a;box-sizing:border-box;"></div>
<span class="t" style="top:154px;font-size:13.333px;line-height:13.333px;color:#111111;font-family:'Liberation Mono', monospace;left:612px;transform-origin:0 0;transform:scaleX(1.0042);">dsPORelRow.DueDate</span>
<div style="left:612px;top:152.4px;width:2px;height:15.4px;background:#000000;"></div>
<div style="left:596.5px;top:454px;width:302px;height:51.5px;background:#ffffe1;border:1px solid #dcdcdc;border-top:none;border-left-color:#9c9c9c;box-sizing:border-box;"></div>
<div style="left:909px;top:151px;width:28px;height:28px;background:#575553;"></div>
<span class="t" style="top:159px;font-size:11px;line-height:11px;color:#ffffff;font-weight:700;left:923px;transform:translateX(-50%);">+</span>
<div style="left:938px;top:151px;width:28px;height:28px;background:#575553;"></div>
<span class="t" style="top:160px;font-size:11px;line-height:11px;color:#ffffff;font-weight:700;left:952px;transform:translateX(-50%);">-</span>
<div style="left:967px;top:151px;width:28px;height:28px;background:#575553;"></div>
<span class="t" style="top:159px;font-size:11px;line-height:11px;color:#ffffff;font-weight:700;left:981px;transform:translateX(-50%);">*</span>
<div style="left:996px;top:151px;width:28px;height:28px;background:#575553;"></div>
<span class="t" style="top:160px;font-size:11px;line-height:11px;color:#ffffff;font-weight:700;left:1010px;transform:translateX(-50%);">/</span>
<div style="left:909px;top:180px;width:28px;height:28px;background:#575553;"></div>
<span class="t" style="top:189px;font-size:11px;line-height:11px;color:#ffffff;font-weight:700;left:923px;transform:translateX(-50%);">==</span>
<div style="left:938px;top:180px;width:28px;height:28px;background:#575553;"></div>
<span class="t" style="top:189px;font-size:11px;line-height:11px;color:#ffffff;font-weight:700;left:952px;transform:translateX(-50%);">&lt;</span>
<div style="left:967px;top:180px;width:28px;height:28px;background:#575553;"></div>
<span class="t" style="top:189px;font-size:11px;line-height:11px;color:#ffffff;font-weight:700;left:981px;transform:translateX(-50%);">&gt;</span>
<div style="left:996px;top:180px;width:28px;height:28px;background:#575553;"></div>
<span class="t" style="top:189px;font-size:11px;line-height:11px;color:#ffffff;font-weight:700;left:1010px;transform:translateX(-50%);">&lt;&gt;</span>
<div style="left:909px;top:209px;width:28px;height:28px;background:#575553;"></div>
<span class="t" style="top:218px;font-size:11px;line-height:11px;color:#ffffff;font-weight:700;left:923px;transform:translateX(-50%);">&lt;=</span>
<div style="left:938px;top:209px;width:28px;height:28px;background:#575553;"></div>
<span class="t" style="top:218px;font-size:11px;line-height:11px;color:#ffffff;font-weight:700;left:952px;transform:translateX(-50%);">&gt;=</span>
<div style="left:967px;top:209px;width:28px;height:28px;background:#575553;"></div>
<span class="t" style="top:218px;font-size:11px;line-height:11px;color:#ffffff;font-weight:700;left:981px;transform:translateX(-50%);">(</span>
<div style="left:996px;top:209px;width:28px;height:28px;background:#575553;"></div>
<span class="t" style="top:218px;font-size:11px;line-height:11px;color:#ffffff;font-weight:700;left:1010px;transform:translateX(-50%);">)</span>
<div style="left:909px;top:238px;width:28px;height:28px;background:#575553;"></div>
<span class="t" style="top:246px;font-size:11px;line-height:11px;color:#ffffff;font-weight:700;left:923px;transform:translateX(-50%);">&quot;</span>
<div style="left:938px;top:238px;width:28px;height:28px;background:#575553;"></div>
<span class="t" style="top:247px;font-size:11px;line-height:11px;color:#ffffff;font-weight:700;left:952px;transform:translateX(-50%);">,</span>
<div style="left:967px;top:238px;width:28px;height:28px;background:#575553;"></div>
<span class="t" style="top:247px;font-size:11px;line-height:11px;color:#ffffff;font-weight:700;left:981px;transform:translateX(-50%);">:</span>
<div style="left:996px;top:238px;width:28px;height:28px;background:#575553;"></div>
<span class="t" style="top:247px;font-size:11px;line-height:11px;color:#ffffff;font-weight:700;left:1010px;transform:translateX(-50%);">/*</span>
<div style="left:909px;top:267px;width:38px;height:28px;background:#575553;"></div>
<span class="t" style="top:276px;font-size:11.5px;line-height:11.5px;color:#ffffff;font-weight:700;left:928px;transform:translateX(-50%);">And</span>
<div style="left:948px;top:267px;width:37px;height:28px;background:#575553;"></div>
<span class="t" style="top:276px;font-size:11.5px;line-height:11.5px;color:#ffffff;font-weight:700;left:966.5px;transform:translateX(-50%);">Or</span>
<div style="left:986px;top:267px;width:38px;height:28px;background:#575553;"></div>
<span class="t" style="top:276px;font-size:11.5px;line-height:11.5px;color:#ffffff;font-weight:700;left:1005px;transform:translateX(-50%);">Not</span>
<div style="left:909px;top:296px;width:57px;height:28px;background:#575553;"></div>
<span class="t" style="top:305px;font-size:11.5px;line-height:11.5px;color:#ffffff;font-weight:700;left:937.5px;transform:translateX(-50%);">True</span>
<div style="left:967px;top:296px;width:57px;height:28px;background:#575553;"></div>
<span class="t" style="top:305px;font-size:11.5px;line-height:11.5px;color:#ffffff;font-weight:700;left:995.5px;transform:translateX(-50%);">False</span>
<div style="left:939px;top:325px;width:56px;height:28px;background:#575553;"></div>
<span class="t" style="top:334px;font-size:11.5px;line-height:11.5px;color:#ffffff;font-weight:700;left:967px;transform:translateX(-50%);">Null</span>
<div style="left:410px;top:513px;width:75px;height:22px;background:#575553;"></div>
<span class="t" style="top:519px;font-size:11px;line-height:11px;color:#f0f0f0;left:447.5px;transform:translateX(-50%);">OK</span>
<div style="left:494px;top:513px;width:75px;height:22px;background:#575553;"></div>
<span class="t" style="top:519px;font-size:11px;line-height:11px;color:#f0f0f0;left:531.5px;transform:translateX(-50%);">Cancel</span>
<div style="left:907px;top:513px;width:113px;height:22px;background:#575553;"></div>
<span class="t" style="top:519px;font-size:11px;line-height:11px;color:#f0f0f0;left:963.5px;transform:translateX(-50%);">Check Syntax</span>
</body></html>
